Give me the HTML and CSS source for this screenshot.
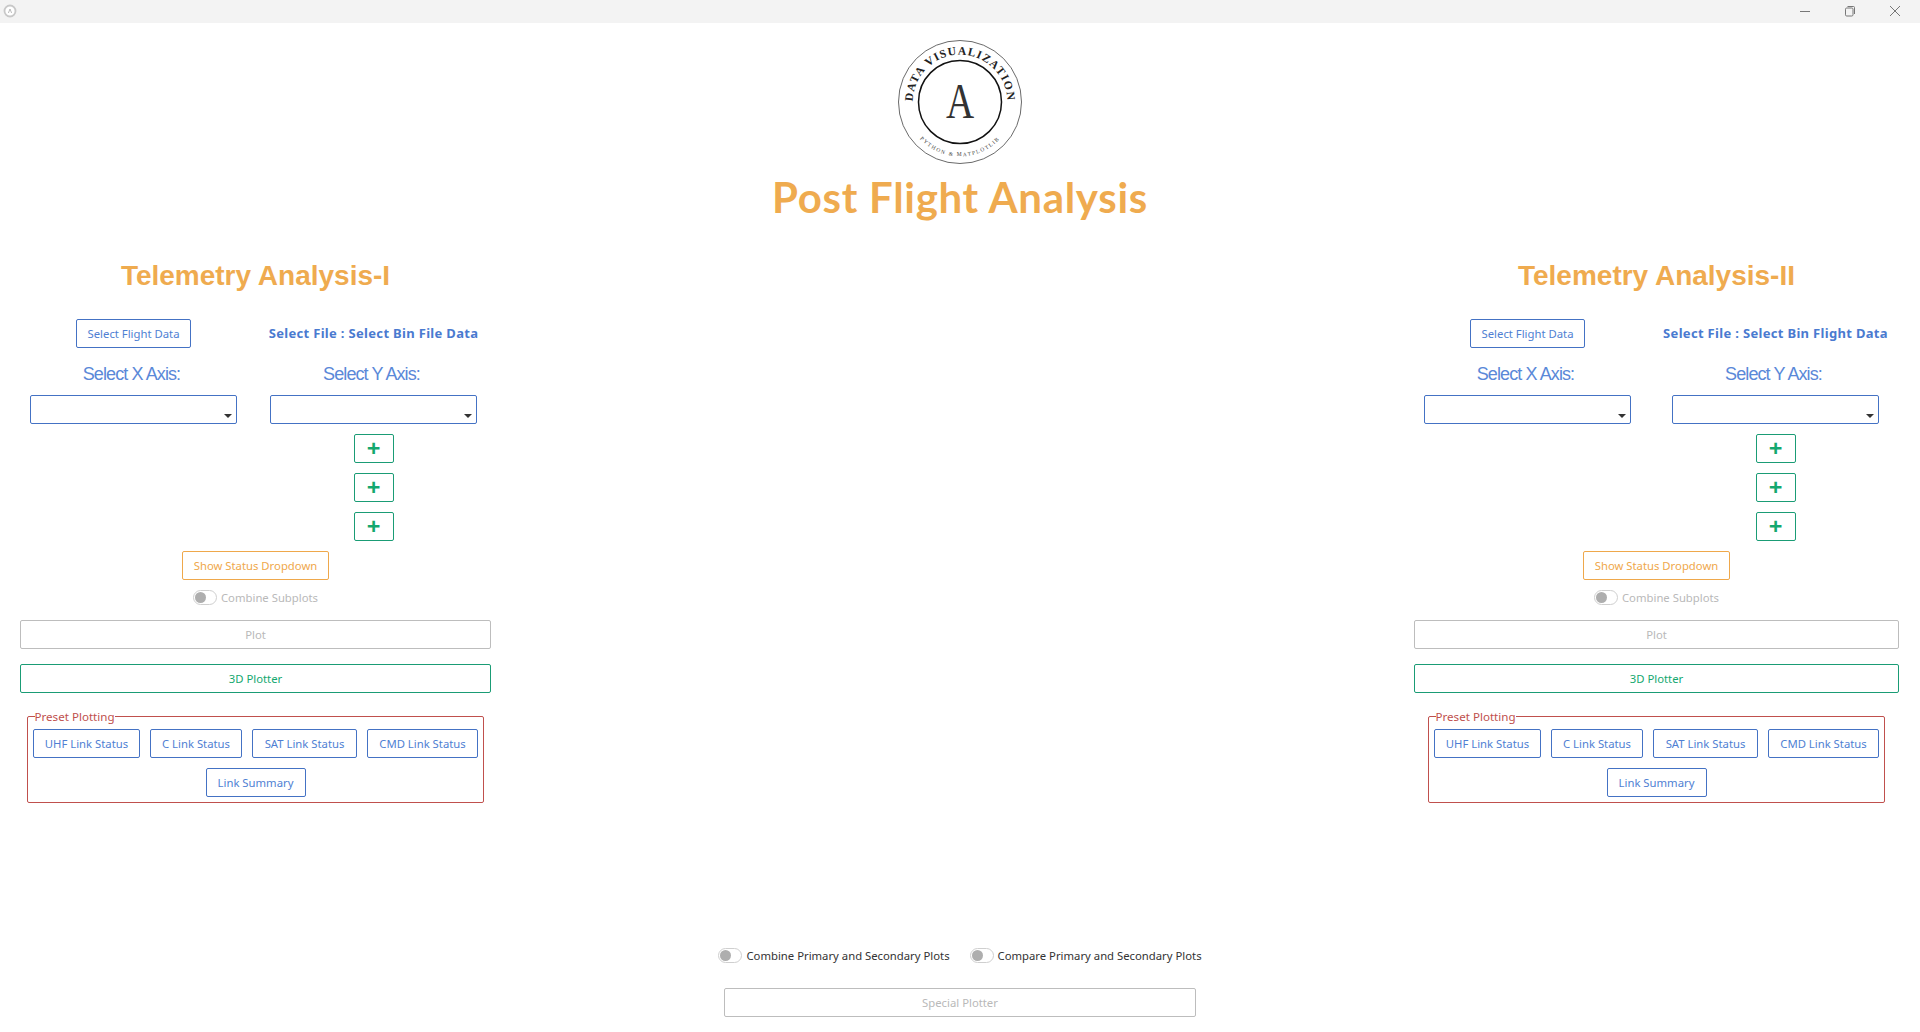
FILE: index.html
```html
<!DOCTYPE html>
<html lang="en">
<head>
    <meta charset="UTF-8">
    <meta name="viewport" content="width=device-width, initial-scale=1.0">
    <title>Post Flight Analysis</title>
    <link rel="stylesheet" href="styles.css">
</head>
<body>

    <div class="titlebar">
        <svg class="app-icon" width="14" height="14" viewBox="0 0 14 14">
            <circle cx="7" cy="7" r="5.5" fill="#fff" stroke="#c8c8c8" stroke-width="1.8"/>
            <path d="M5.4 9 L7 5 L8.6 9" fill="none" stroke="#aaa" stroke-width="0.8"/>
        </svg>
        <div class="win-controls">
            <svg width="12" height="12" viewBox="0 0 12 12"><path d="M1 6.5 H11" stroke="#777" fill="none"/></svg>
            <svg width="12" height="12" viewBox="0 0 12 12"><rect x="1.5" y="3" width="7.5" height="8" rx="1.2" stroke="#777" fill="none"/><path d="M3.5 1.5 H9.5 Q10.5 1.5 10.5 2.5 V9" stroke="#777" fill="none"/></svg>
            <svg width="12" height="12" viewBox="0 0 12 12"><path d="M1 1 L11 11 M11 1 L1 11" stroke="#777" fill="none"/></svg>
        </div>
    </div>

    <div class="header">
        <svg class="logo" width="126" height="126" viewBox="0 0 126 126">
            <defs>
                <path id="arcTop" d="M16.2 69 A47.2 47.2 0 1 1 109.8 69"/>
                <path id="arcBottom" d="M11 78 A54 54 0 0 0 115 78"/>
            </defs>
            <circle cx="63" cy="63" r="61.5" fill="none" stroke="#444" stroke-width="0.8"/>
            <circle cx="63" cy="63" r="41.5" fill="none" stroke="#111" stroke-width="1.5"/>
            <text class="logo-top"><textPath href="#arcTop" startOffset="50%" text-anchor="middle">DATA VISUALIZATION</textPath></text>
            <text class="logo-bottom"><textPath href="#arcBottom" startOffset="50%" text-anchor="middle">PYTHON &amp; MATPLOTLIB</textPath></text>
            <text class="logo-a" x="0" y="0" transform="translate(63 79) scale(0.78 1)" text-anchor="middle">A</text>
        </svg>
        <h1>Post Flight Analysis</h1>
    </div>

    <div class="panels">

        <div class="panel panel-left">
            <h2>Telemetry Analysis-I</h2>
            <div class="axis-grid">
                <button class="btn btn-blue btn-file">Select Flight Data</button>
                <span class="file-label">Select File : Select Bin File Data</span>
                <span class="axis-label">Select X Axis:</span>
                <span class="axis-label">Select Y Axis:</span>
                <div class="select-wrap"><select class="axis-select"></select></div>
                <div class="select-wrap"><select class="axis-select"></select></div>
                <button class="btn btn-green btn-plus">+</button>
                <button class="btn btn-green btn-plus">+</button>
                <button class="btn btn-green btn-plus">+</button>
            </div>
            <button class="btn btn-orange btn-status">Show Status Dropdown</button>
            <div class="toggle-row toggle-off">
                <span class="toggle"></span>
                <span>Combine Subplots</span>
            </div>
            <button class="btn btn-gray btn-wide">Plot</button>
            <button class="btn btn-green btn-wide btn-3d">3D Plotter</button>
            <fieldset class="preset">
                <legend>Preset Plotting</legend>
                <div class="preset-row">
                    <button class="btn btn-blue">UHF Link Status</button>
                    <button class="btn btn-blue">C Link Status</button>
                    <button class="btn btn-blue">SAT Link Status</button>
                    <button class="btn btn-blue">CMD Link Status</button>
                </div>
                <button class="btn btn-blue btn-summary">Link Summary</button>
            </fieldset>
        </div>

        <div class="panel panel-right">
            <h2>Telemetry Analysis-II</h2>
            <div class="axis-grid">
                <button class="btn btn-blue btn-file">Select Flight Data</button>
                <span class="file-label">Select File : Select Bin Flight Data</span>
                <span class="axis-label">Select X Axis:</span>
                <span class="axis-label">Select Y Axis:</span>
                <div class="select-wrap"><select class="axis-select"></select></div>
                <div class="select-wrap"><select class="axis-select"></select></div>
                <button class="btn btn-green btn-plus">+</button>
                <button class="btn btn-green btn-plus">+</button>
                <button class="btn btn-green btn-plus">+</button>
            </div>
            <button class="btn btn-orange btn-status">Show Status Dropdown</button>
            <div class="toggle-row toggle-off">
                <span class="toggle"></span>
                <span>Combine Subplots</span>
            </div>
            <button class="btn btn-gray btn-wide">Plot</button>
            <button class="btn btn-green btn-wide btn-3d">3D Plotter</button>
            <fieldset class="preset">
                <legend>Preset Plotting</legend>
                <div class="preset-row">
                    <button class="btn btn-blue">UHF Link Status</button>
                    <button class="btn btn-blue">C Link Status</button>
                    <button class="btn btn-blue">SAT Link Status</button>
                    <button class="btn btn-blue">CMD Link Status</button>
                </div>
                <button class="btn btn-blue btn-summary">Link Summary</button>
            </fieldset>
        </div>

    </div>

    <div class="footer">
        <div class="footer-toggles">
            <div class="toggle-row">
                <span class="toggle"></span>
                <span>Combine Primary and Secondary Plots</span>
            </div>
            <div class="toggle-row">
                <span class="toggle"></span>
                <span>Compare Primary and Secondary Plots</span>
            </div>
        </div>
        <button class="btn btn-gray btn-special">Special Plotter</button>
    </div>

</body>
</html>
```

FILE: styles.css
```css
* {
    box-sizing: border-box;
}
html, body {
    margin: 0;
    height: 100%;
}
body {
    font-family: "Noto Sans", "Open Sans", sans-serif;
    font-size: 11.3px;
    background-color: white;
    color: #333;
    overflow: hidden;
}
.titlebar {
    height: 23px;
    background-color: #f3f3f3;
    display: flex;
    align-items: center;
    justify-content: space-between;
    padding: 0 19px 2px 3px;
}
.win-controls {
    display: flex;
    gap: 33px;
}
.header {
    display: flex;
    flex-direction: column;
    align-items: center;
    padding-top: 16px;
}
.logo {
    display: block;
}
.logo-top {
    font-family: "Liberation Serif", serif;
    font-size: 11.5px;
    font-weight: bold;
    letter-spacing: 1.2px;
    fill: #222;
}
.logo-bottom {
    font-family: "Liberation Serif", serif;
    font-size: 5.5px;
    letter-spacing: 1.4px;
    fill: #444;
}
.logo-a {
    font-family: "Liberation Serif", serif;
    font-size: 50px;
    fill: #333;
}
h1 {
    margin: 8px 0 0;
    font-family: "Lato", sans-serif;
    font-size: 42px;
    line-height: 48px;
    font-weight: bold;
    letter-spacing: 0.7px;
    color: #efab4f;
}
.panels {
    display: flex;
    justify-content: space-between;
    padding: 0 21px 0 20px;
    margin-top: 38px;
}
.panel {
    display: flex;
    flex-direction: column;
    align-items: center;
}
.panel-left {
    width: 471px;
}
.panel-right {
    width: 485px;
}
h2 {
    margin: 0;
    font-family: "Liberation Sans", Arial, sans-serif;
    font-size: 28px;
    line-height: 34px;
    font-weight: bold;
    color: #efab4f;
}
.axis-grid {
    display: grid;
    grid-template-columns: 207px 207px;
    column-gap: 33px;
    justify-content: start;
    justify-items: center;
    width: 100%;
    padding-left: 10px;
    margin-top: 26px;
}
.panel-right .axis-grid {
    column-gap: 41px;
}
.btn {
    height: 29px;
    font-family: inherit;
    font-size: 11.3px;
    background: white;
    border: 1.5px solid;
    border-radius: 2px;
    padding: 0;
    white-space: nowrap;
}
.btn-blue {
    color: #4f7fd3;
    border-color: #4472c4;
}
.btn-green {
    color: #14a86f;
    border-color: #1a9c75;
}
.btn-orange {
    color: #efa84b;
    border-color: #efa84b;
}
.btn-gray {
    color: #b9b9b9;
    border-color: #bdbdbd;
}
.btn-file {
    width: 115px;
}
.file-label {
    font-size: 13px;
    line-height: 29px;
    font-weight: bold;
    letter-spacing: 0.32px;
    color: #4a7ad0;
    white-space: nowrap;
}
.axis-label {
    font-family: "Liberation Sans", Arial, sans-serif;
    font-size: 18px;
    line-height: 21px;
    letter-spacing: -0.9px;
    color: #5a88d8;
    margin-top: 16px;
    padding-right: 4px;
}
.select-wrap {
    position: relative;
    width: 207px;
    height: 29px;
    margin-top: 10px;
}
.select-wrap::after {
    content: "";
    position: absolute;
    right: 5px;
    bottom: 6px;
    border-left: 4px solid transparent;
    border-right: 4px solid transparent;
    border-top: 4px solid #333;
}
.axis-select {
    display: block;
    width: 100%;
    height: 100%;
    appearance: none;
    background: white;
    border: 1.5px solid #4472c4;
    border-radius: 2px;
}
.btn-plus {
    grid-column: 2;
    width: 40px;
    margin-top: 10px;
    font-size: 24px;
    line-height: 22px;
    font-weight: bold;
    padding-bottom: 2px;
}
.btn-status {
    width: 147px;
    margin-top: 10px;
}
.toggle-row {
    display: flex;
    align-items: center;
    gap: 4px;
    height: 15px;
    margin-top: 10px;
    white-space: nowrap;
}
.toggle-off {
    color: #b9b9b9;
}
.toggle {
    position: relative;
    width: 24px;
    height: 15px;
    border: 1px solid #cfcfcf;
    border-radius: 8px;
    background: white;
}
.toggle::before {
    content: "";
    position: absolute;
    left: 1px;
    top: 1px;
    width: 11px;
    height: 11px;
    border-radius: 50%;
    background: #aeaeae;
}
.btn-wide {
    width: 100%;
    margin-top: 15px;
}
.preset {
    width: 457px;
    height: 94px;
    margin: 16px 0 0;
    padding: 5px 5px 0;
    border: 1.5px solid #c0504d;
    border-radius: 2px;
    display: flex;
    flex-direction: column;
    align-items: center;
    gap: 10px;
}
.preset legend {
    padding: 0;
    margin-left: 1.5px;
    font-size: 11.6px;
    line-height: 15px;
    color: #c0504d;
}
.preset-row {
    display: grid;
    grid-template-columns: 107px 92px 105px 111px;
    column-gap: 10px;
}
.btn-summary {
    width: 100px;
}
.footer {
    display: flex;
    flex-direction: column;
    align-items: center;
    margin-top: 135px;
}
.footer-toggles {
    display: flex;
    gap: 20px;
}
.btn-special {
    width: 472px;
    margin-top: 25px;
}
```
